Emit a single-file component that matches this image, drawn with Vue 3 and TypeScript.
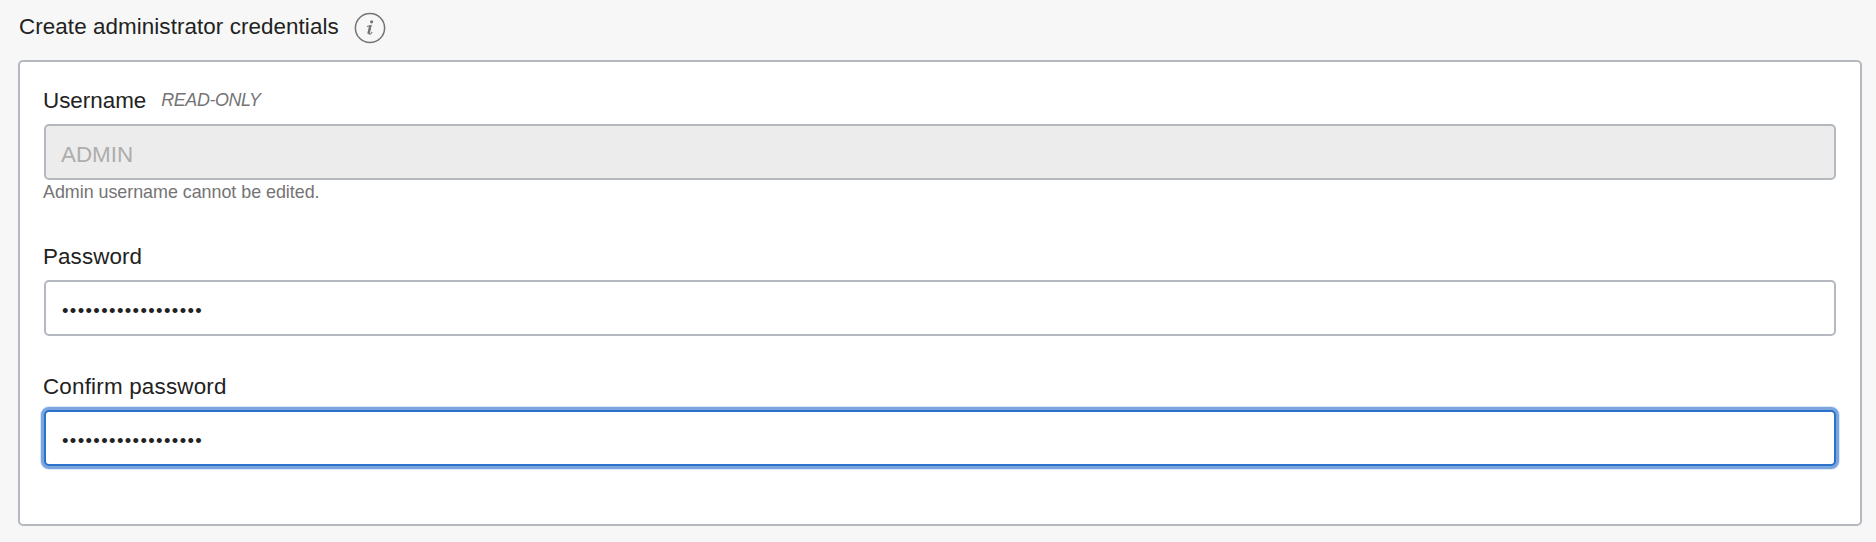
<script setup lang="ts">
import { ref } from 'vue'

interface Field {
  id: string
  label: string
  note?: string
  type: 'text' | 'password'
  hint?: string
  disabled?: boolean
  active?: boolean
}

const fields: Field[] = [
  {
    id: 'username',
    label: 'Username',
    note: 'READ-ONLY',
    type: 'text',
    hint: 'Admin username cannot be edited.',
    disabled: true,
  },
  { id: 'password', label: 'Password', type: 'password' },
  { id: 'confirm', label: 'Confirm password', type: 'password', active: true },
]

const values = ref<Record<string, string>>({
  username: 'ADMIN',
  password: 'x'.repeat(18),
  confirm: 'x'.repeat(18),
})
</script>

<template>
  <main class="page">
    <header class="heading">
      <h2 class="title">Create administrator credentials</h2>
      <svg class="info" viewBox="0 0 32 32" aria-label="Information">
        <circle cx="16" cy="16" r="14.6" fill="none" stroke="#747474" stroke-width="1.5" />
        <circle cx="17.6" cy="9.8" r="1.6" fill="#747474" />
        <path d="M13 14.5 L17 13.5 L15.1 21 Q14.8 22.7 16.4 21.9 L18.3 20.2" fill="none" stroke="#747474" stroke-width="1.1" />
        <path d="M16.3 13.8 L14.4 21.8" fill="none" stroke="#747474" stroke-width="2.3" />
      </svg>
    </header>
    <form class="panel" autocomplete="off">
      <div v-for="field in fields" :key="field.id" class="field">
        <div class="label-row">
          <label :for="field.id" class="label" :class="`label-${field.id}`">{{ field.label }}</label>
          <em v-if="field.note" class="note">{{ field.note }}</em>
        </div>
        <input
          :id="field.id"
          v-model="values[field.id]"
          class="input"
          :class="{ active: field.active, masked: field.type === 'password' }"
          :type="field.type"
          :disabled="field.disabled"
        />
        <p v-if="field.hint" class="hint">{{ field.hint }}</p>
      </div>
    </form>
  </main>
</template>

<style>
body {
  margin: 0;
  background: #f7f7f7;
}
</style>

<style scoped>
.page {
  box-sizing: border-box;
  height: 542px;
  padding: 0 14px 16px 18px;
  display: flex;
  flex-direction: column;
  background: #f7f7f7;
  color: #222;
  font-family: "Liberation Sans", Arial, sans-serif;
  font-size: 22.4px;
}
.heading {
  height: 60px;
  display: flex;
  align-items: flex-start;
  gap: 15px;
}
.title {
  margin: 14px 0 0 1px;
  font-size: 22.4px;
  font-weight: 400;
  line-height: 26px;
  letter-spacing: 0.075px;
  white-space: nowrap;
}
.info {
  width: 32px;
  height: 32px;
  margin-top: 12px;
}
.panel {
  box-sizing: border-box;
  flex: 1;
  padding: 24px;
  border: 2px solid #b4b8bf;
  border-radius: 5px;
  background: #fff;
}
.field + .field {
  margin-top: 36px;
}
.label-row {
  height: 30px;
  margin: 0 0 8px -1px;
  display: flex;
  align-items: flex-start;
  gap: 15px;
  line-height: 30px;
}
.label-password {
  letter-spacing: 0.1px;
}
.label-confirm {
  letter-spacing: 0.2px;
}
.note {
  color: #747474;
  font-size: 17.9px;
  line-height: 28px;
  letter-spacing: -0.4px;
}
.input {
  box-sizing: border-box;
  display: block;
  width: 100%;
  height: 56px;
  margin: 0;
  padding: 5px 15px 0;
  border: 2px solid #b4b8bf;
  border-radius: 5px;
  outline: none;
  background: #fff;
  color: #222;
  font: inherit;
}
.input:disabled {
  background: #ececec;
  color: #adadad;
}
.input.masked {
  padding-top: 6px;
  padding-left: 16px;
  font-size: 18.5px;
  letter-spacing: 1.365px;
}
.input.active {
  border-color: #2b72c9;
  box-shadow: 0 0 0 3px #7ba5df, 0 0 0 4px #dce8f7;
}
.hint {
  height: 24px;
  margin: 2px 0 0 -1px;
  color: #747474;
  font-size: 17.9px;
  line-height: 20px;
  letter-spacing: -0.03px;
}
</style>
